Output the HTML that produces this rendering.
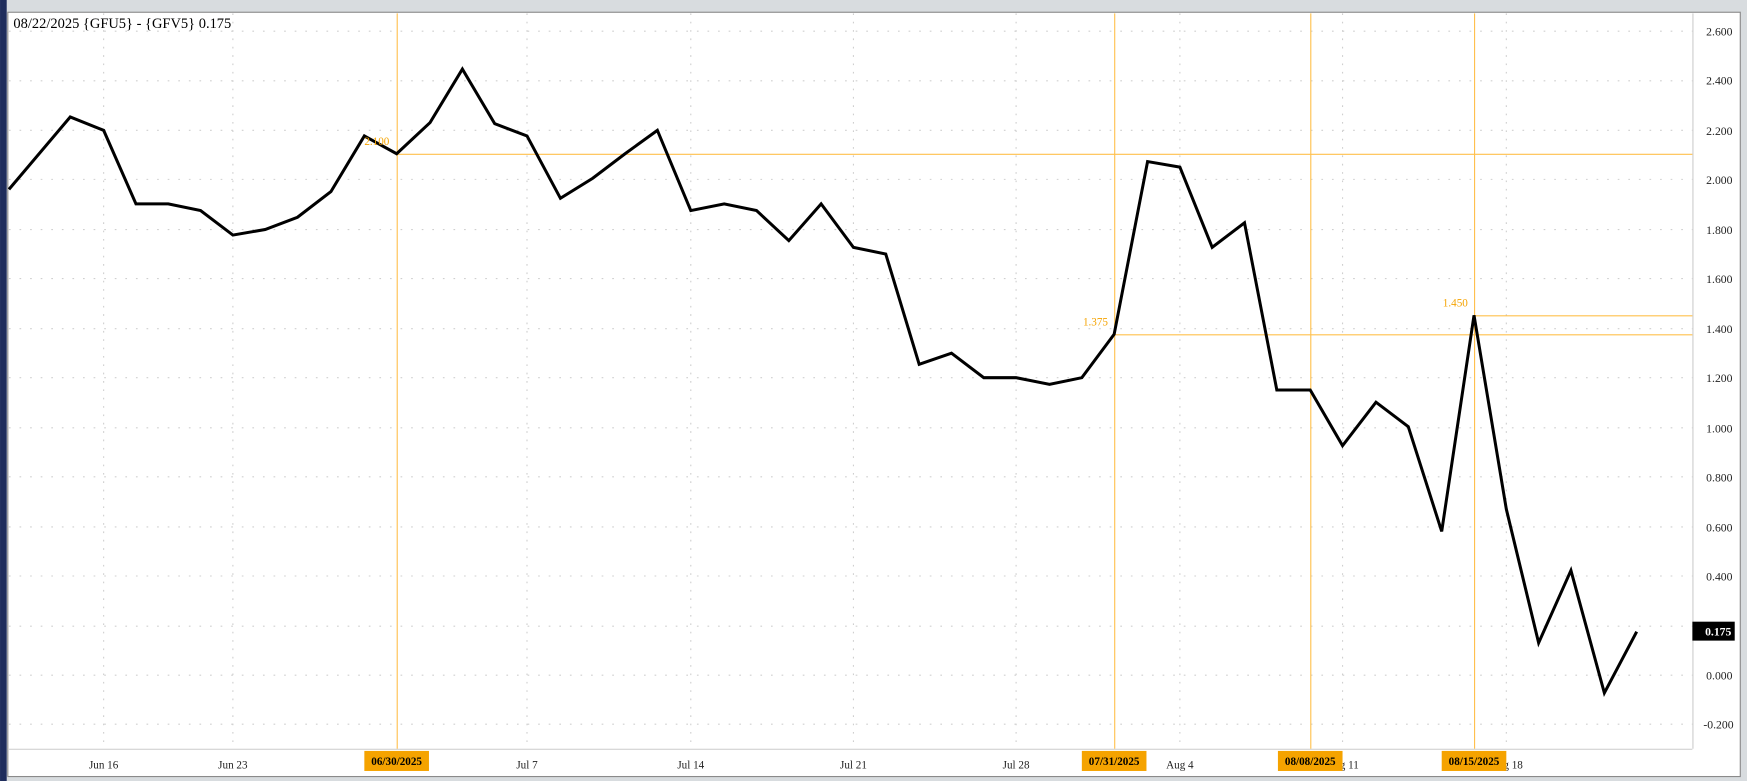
<!DOCTYPE html><html><head><style>html,body{margin:0;padding:0;background:#d8dcdf;overflow:hidden}</style></head><body>
<svg width="1747" height="781" viewBox="0 0 1568 701" xmlns="http://www.w3.org/2000/svg" style="display:block;font-family:'Liberation Serif',serif">
<rect width="1568" height="701" fill="#d8dcdf"/>
<rect x="0" y="0" width="6" height="701" fill="#1f2d5c"/>
<rect x="7" y="11" width="1555" height="686" fill="#fff" stroke="#8a8a8a" stroke-width="1"/>
<line x1="1519.5" y1="12" x2="1519.5" y2="672" stroke="#ccc"/>
<line x1="8" y1="672.5" x2="1519" y2="672.5" stroke="#ccc"/>
<g stroke="#cfcfcf" stroke-dasharray="1.5,8" stroke-width="1">
<line x1="8" y1="28" x2="1519" y2="28"/><line x1="8" y1="72.5" x2="1519" y2="72.5"/><line x1="8" y1="117" x2="1519" y2="117"/><line x1="8" y1="161" x2="1519" y2="161"/><line x1="8" y1="206" x2="1519" y2="206"/><line x1="8" y1="250" x2="1519" y2="250"/><line x1="8" y1="295" x2="1519" y2="295"/><line x1="8" y1="339" x2="1519" y2="339"/><line x1="8" y1="384" x2="1519" y2="384"/><line x1="8" y1="428" x2="1519" y2="428"/><line x1="8" y1="473" x2="1519" y2="473"/><line x1="8" y1="517" x2="1519" y2="517"/><line x1="8" y1="562" x2="1519" y2="562"/><line x1="8" y1="606" x2="1519" y2="606"/><line x1="8" y1="650" x2="1519" y2="650"/>
</g>
<g stroke="#cfcfcf" stroke-dasharray="1.5,6">
<line x1="93" y1="12" x2="93" y2="672"/><line x1="209" y1="12" x2="209" y2="672"/><line x1="473" y1="12" x2="473" y2="672"/><line x1="620" y1="12" x2="620" y2="672"/><line x1="766" y1="12" x2="766" y2="672"/><line x1="912" y1="12" x2="912" y2="672"/><line x1="1059" y1="12" x2="1059" y2="672"/><line x1="1205" y1="12" x2="1205" y2="672"/><line x1="1352" y1="12" x2="1352" y2="672"/>
</g>
<g stroke="#ffc04d" stroke-width="1">
<line x1="356.5" y1="12" x2="356.5" y2="672"/><line x1="1000.5" y1="12" x2="1000.5" y2="672"/><line x1="1176.5" y1="12" x2="1176.5" y2="672"/><line x1="1323.5" y1="12" x2="1323.5" y2="672"/>
<line x1="356" y1="138.5" x2="1519" y2="138.5"/><line x1="1000" y1="300.5" x2="1519" y2="300.5"/><line x1="1323" y1="283.5" x2="1519" y2="283.5"/>
</g>
<polyline fill="none" stroke="#000" stroke-width="2.7" stroke-linejoin="miter" points="8,170 63,105 93,117 122,183 151,183 180,189 209,211 238,206 267,195 297,172 327,122 356,138 386,110 415,62 444,111 473,122 503,178 532,160 561,138 590,117 620,189 650,183 679,189 708,216 737,183 766,222 795,228 825,327 854,317 883,339 912,339 942,345 971,339 1000,300 1030,145 1059,150 1088,222 1117,200 1146,350 1176,350 1205,400 1235,361 1264,383 1294,477 1323,283 1352,457 1381,577 1410,512 1440,622 1469,567"/>
<g fill="#f5a300" font-size="10"><text x="327" y="130">2.100</text><text x="972" y="292">1.375</text><text x="1295" y="275">1.450</text></g>
<text x="12" y="25" font-size="13" fill="#000">08/22/2025 {GFU5} - {GFV5} 0.175</text>
<g font-size="10.5" fill="#222" text-anchor="end">
<text x="1555" y="32">2.600</text><text x="1555" y="76">2.400</text><text x="1555" y="121">2.200</text><text x="1555" y="165">2.000</text><text x="1555" y="210">1.800</text><text x="1555" y="254">1.600</text><text x="1555" y="299">1.400</text><text x="1555" y="343">1.200</text><text x="1555" y="388">1.000</text><text x="1555" y="432">0.800</text><text x="1555" y="477">0.600</text><text x="1555" y="521">0.400</text><text x="1555" y="610">0.000</text><text x="1556" y="654">-0.200</text>
</g>
<rect x="1519" y="558" width="38" height="17" fill="#000"/>
<text x="1554" y="570.5" font-size="10.5" fill="#fff" font-weight="bold" text-anchor="end">0.175</text>
<g font-size="10" fill="#222" text-anchor="middle">
<text x="93" y="690">Jun 16</text><text x="209" y="690">Jun 23</text><text x="473" y="690">Jul 7</text><text x="620" y="690">Jul 14</text><text x="766" y="690">Jul 21</text><text x="912" y="690">Jul 28</text><text x="1059" y="690">Aug 4</text><text x="1205" y="690">Aug 11</text><text x="1352" y="690">Aug 18</text>
</g>
<g fill="#f5a300"><rect x="327" y="674" width="58" height="18"/><rect x="971" y="674" width="58" height="18"/><rect x="1147" y="674" width="58" height="18"/><rect x="1294" y="674" width="58" height="18"/></g>
<g font-size="10" font-weight="bold" fill="#000" text-anchor="middle"><text x="356" y="686.5">06/30/2025</text><text x="1000" y="686.5">07/31/2025</text><text x="1176" y="686.5">08/08/2025</text><text x="1323" y="686.5">08/15/2025</text></g>
</svg>
</body></html>
